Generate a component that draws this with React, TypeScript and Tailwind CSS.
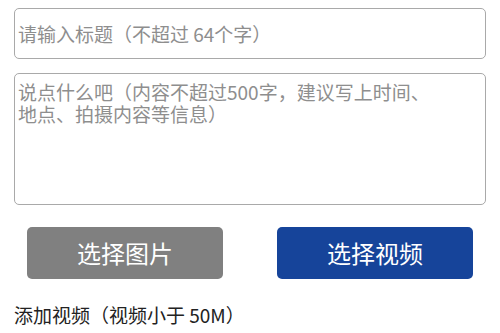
import { useState } from 'react';

const font = { fontFamily: '"Noto Sans CJK SC", "Noto Sans", sans-serif' };

function App() {
  const [title, setTitle] = useState('');
  const [content, setContent] = useState('');

  return (
    <div className="w-[500px] h-[333px] bg-white overflow-hidden" style={font}>
      {/* 标题 */}
      <div className="px-[14px] pt-2">
        <input
          value={title}
          onChange={(e) => setTitle(e.target.value)}
          placeholder="请输入标题（不超过 64个字）"
          className="w-full h-[51px] border border-[#a9a9a9] rounded-[5px] pl-[3px] text-[19px] text-[#333] placeholder:text-[#8e8e8e] outline-none"
        />
      </div>

      {/* 内容 */}
      <div className="px-[14px] pt-[14px]">
        <textarea
          value={content}
          onChange={(e) => setContent(e.target.value)}
          placeholder={'说点什么吧（内容不超过500字，建议写上时间、\n地点、拍摄内容等信息）'}
          className="block w-full h-[132px] border border-[#a9a9a9] rounded-[5px] pl-[3px] pt-[7px] text-[19px] leading-[22px] text-[#333] placeholder:text-[#8e8e8e] outline-none resize-none"
        />
      </div>

      {/* 按钮 */}
      <div className="flex justify-between px-[27px] pt-[22px]">
        <button className="w-[196px] h-[52px] rounded-[5px] bg-[#808080] text-white text-[24px]">
          选择图片
        </button>
        <button className="w-[196px] h-[52px] rounded-[5px] bg-[#16449a] text-white text-[24px]">
          选择视频
        </button>
      </div>

      <div className="px-[14px] pt-[24px] text-[19px] leading-[24px] text-[#222]">
        添加视频（视频小于 50M）
      </div>
    </div>
  );
}

export default App;
